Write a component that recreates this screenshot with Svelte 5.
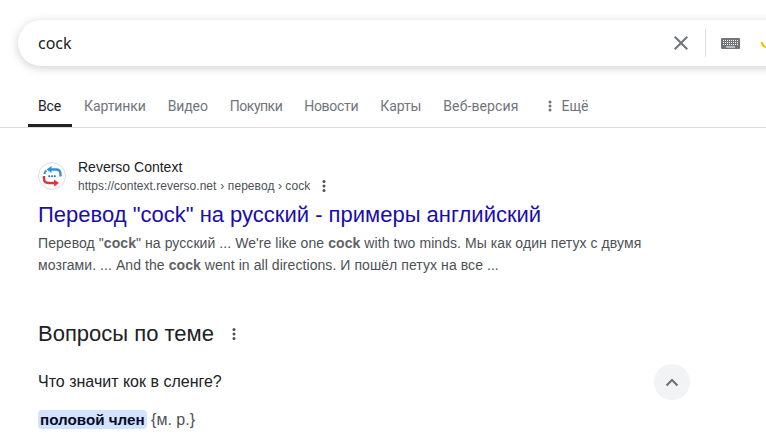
<script>
  const tabs = ['Все', 'Картинки', 'Видео', 'Покупки', 'Новости', 'Карты', 'Веб-версия'];
</script>

<div class="page">
  <div class="search">
    <span class="query">cock</span>
    <svg class="clear" width="24" height="24" viewBox="0 0 24 24"><path fill="#70757a" d="M19 6.410 17.590 5 12 10.590 6.410 5 5 6.410 10.590 12 5 17.590 6.410 19 12 13.410 17.590 19 19 17.590 13.410 12z"/></svg>
    <span class="divider"></span>
    <svg class="kbd" width="19" height="11" viewBox="0 0 19 11">
      <rect width="19" height="11" rx="1" fill="#70757a"/>
      <path stroke="#fff" stroke-width="1" stroke-dasharray="1 1" d="M2 2.500h15M2 4.500h15M2 6.500h15"/>
      <path stroke="#fff" stroke-width="1" d="M5 9h9"/>
    </svg>
    <svg class="mic" width="10" height="14" viewBox="0 0 10 14"><path fill="none" stroke="#fbbc04" stroke-width="2.200" d="M1 6c0 3 2 5 5 5"/></svg>
  </div>

  <nav class="tabs">
    {#each tabs as tab, i}
      <span class="tab" class:active={i === 0}>{tab}</span>
    {/each}
    <span class="tab more">
      <svg width="4" height="12" viewBox="0 0 4 12"><g fill="#70757a"><circle cx="2" cy="2" r="1.500"/><circle cx="2" cy="6" r="1.500"/><circle cx="2" cy="10" r="1.500"/></g></svg>
      Ещё
    </span>
  </nav>

  <main>
    <section class="result">
      <div class="source">
        <span class="favicon">
          <svg width="26" height="26" viewBox="0 0 26 26" fill="none">
            <path stroke="#2f8fd8" stroke-width="2.300" d="M11 6.500h6c3 0 4.500 2 4.500 4.500v2.500"/>
            <path fill="#2f8fd8" d="M12.500 3v7L7.500 6.500z"/>
            <path stroke="#2f8fd8" stroke-width="2" d="M5.500 11c0-1.500.6-2.500 2-3.500"/>
            <path stroke="#e0343c" stroke-width="2.400" d="M5 13v2.500c0 3 2 4.500 4.500 4.500h6.500"/>
            <path fill="#e0343c" d="M15 16.500v7l5-3.500z"/>
            <g fill="#2f6fb0"><rect x="9.300" y="12.300" width="1.800" height="1.800"/><rect x="12.100" y="12.300" width="1.800" height="1.800"/><rect x="14.900" y="12.300" width="1.800" height="1.800"/></g>
          </svg>
        </span>
        <div class="meta">
          <div class="site">Reverso Context</div>
          <div class="url">https://context.reverso.net <span class="crumb">› перевод › cock</span>
            <svg class="dots" width="4" height="14" viewBox="0 0 4 14"><g fill="#4d5156"><circle cx="2" cy="2.500" r="1.500"/><circle cx="2" cy="7" r="1.500"/><circle cx="2" cy="11.500" r="1.500"/></g></svg>
          </div>
        </div>
      </div>
      <h3>Перевод "cock" на русский - примеры английский</h3>
      <p class="snippet">Перевод "<b>cock</b>" на русский ... We're like one <b>cock</b> with two minds. Мы как один петух с двумя<br/>мозгами. ... And the <b>cock</b> went in all directions. И пошёл петух на все ...</p>
    </section>

    <section class="paa">
      <div class="paa-head">
        <h2>Вопросы по теме</h2>
        <svg width="4" height="14" viewBox="0 0 4 14"><g fill="#4d5156"><circle cx="2" cy="2.500" r="1.500"/><circle cx="2" cy="7" r="1.500"/><circle cx="2" cy="11.500" r="1.500"/></g></svg>
      </div>
      <div class="question">
        <span>Что значит кок в сленге?</span>
        <span class="chev">
          <svg width="14" height="9" viewBox="0 0 14 9"><path fill="none" stroke="#70757a" stroke-width="2.200" d="M1.500 7.500 7 2l5.500 5.500"/></svg>
        </span>
      </div>
      <div class="answer"><mark>половой член</mark> <span class="gram">&#123;м. р.&#125;</span></div>
    </section>
  </main>
</div>

<style>
  :global(body) { margin: 0; background: #fff; }
  .page {
    width: 766px;
    height: 446px;
    overflow: hidden;
    font-family: "Liberation Sans", Arial, sans-serif;
    color: #202124;
    background: #fff;
  }
  .search {
    box-sizing: border-box;
    display: flex;
    align-items: center;
    width: 800px;
    height: 46px;
    margin: 20px 0 0 18px;
    padding-left: 20px;
    border-radius: 24px;
    background: #fff;
    box-shadow: 0 2px 8px 1px rgba(64, 60, 67, .2);
  }
  .query {
    width: 631px;
    font: 16px "Noto Sans", sans-serif;
    color: #202124;
  }
  .clear { flex: none; }
  .divider {
    flex: none;
    width: 1px;
    height: 28px;
    margin: 0 15px 0 12px;
    background: #dadce0;
  }
  .kbd { flex: none; }
  .mic { flex: none; margin-left: 21px; }
  .tabs {
    display: flex;
    gap: 2px;
    height: 61px;
    padding-left: 28px;
    border-bottom: 1px solid #dadce0;
    font: 14px Roboto, sans-serif;
    letter-spacing: -.1px;
  }
  .tab {
    box-sizing: border-box;
    height: 61px;
    padding: 30px 10px 0;
    line-height: 20px;
    color: #70757a;
  }
  .tab.active {
    min-width: 44px;
    color: #202124;
    border-bottom: 3px solid #202124;
  }
  .tab:nth-child(4) { letter-spacing: -.5px; }
  .tab:nth-child(5) { letter-spacing: -.3px; }
  .tab:nth-child(7) { letter-spacing: .1px; }
  .more { margin-left: 8px; display: flex; gap: 9px; align-items: flex-start; letter-spacing: 0; }
  .more svg { margin-top: 4px; }
  main { padding-left: 38px; }
  .result { padding-top: 30px; }
  .source { display: flex; gap: 12px; align-items: center; height: 36px; }
  .favicon {
    box-sizing: border-box;
    display: flex;
    align-items: center;
    justify-content: center;
    flex: none;
    width: 28px;
    height: 28px;
    border-radius: 50%;
    border: 1px solid #dadce0;
    background: #fff;
  }
  .site { font-size: 14px; line-height: 20px; color: #202124; }
  .url { display: flex; align-items: center; gap: 4px; font-size: 12px; line-height: 18px; color: #4d5156; letter-spacing: .01px; }
  .crumb { color: #4d5156; letter-spacing: .07px; }
  .dots { margin-left: 8px; }
  h3 {
    margin: 7px 0 0;
    font-size: 22px;
    font-weight: 400;
    line-height: 28px;
    color: #1a0dab;
  }
  .snippet {
    margin: 3px 0 0;
    font-size: 14px;
    line-height: 22px;
    color: #4d5156;
    letter-spacing: .07px;
  }
  .snippet b { color: #5f6368; }
  .paa-head { display: flex; align-items: center; gap: 18px; margin-top: 44px; height: 28px; }
  h2 { margin: 0; font-size: 22px; font-weight: 400; line-height: 28px; color: #202124; }
  .question {
    display: flex;
    justify-content: space-between;
    align-items: center;
    width: 652px;
    margin-top: 16px;
    height: 36px;
    font-size: 16px;
    color: #202124;
  }
  .chev {
    display: flex;
    align-items: center;
    justify-content: center;
    width: 36px;
    height: 36px;
    border-radius: 50%;
    background: #f1f3f4;
  }
  .answer { margin-top: 10px; font-size: 16px; line-height: 20px; color: #4d5156; }
  mark {
    display: inline-block;
    padding: 0 2px;
    border-radius: 4px;
    background: #d3e3fd;
    color: #040c28;
    font-weight: 700;
    font-size: 15.2px;
    line-height: 19px;
  }
</style>
